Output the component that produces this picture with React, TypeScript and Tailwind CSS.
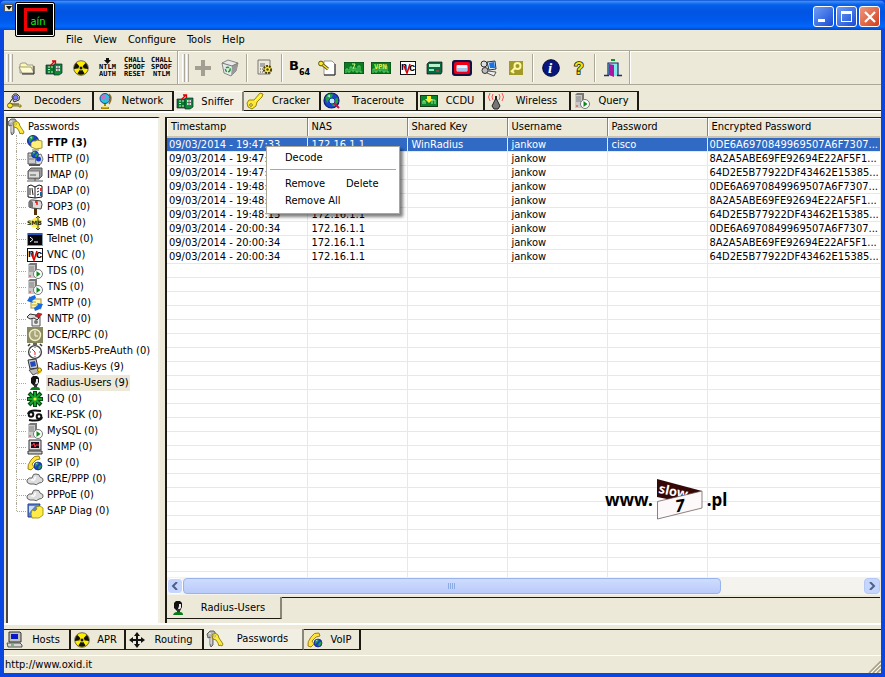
import type { ReactNode } from 'react';
import clsx from 'clsx';

/* ---------- small shared drawings, all on a 16x16 grid ---------- */

const Globe = ({ x = 8, y = 8, r = 5 }: { x?: number; y?: number; r?: number }) => (
  <g transform={`translate(${x} ${y}) scale(${r / 5})`}>
    <circle r="5" fill="#1b3fd0" stroke="#0a1c6b" strokeWidth=".8" />
    <path d="M-4-2 L-2-4.5 L1-4 L0-1.5 L-2 0 L-3 2Z M1 0 L4-2 L4.5 1 L2 4 L0 3Z" fill="#21a03c" />
    <path d="M-3-3 L-1-4 L-1-2Z" fill="#9fe8f4" />
  </g>
);

const Server = () => (
  <>
    <path d="M1 2 L3 0 H10 V13 L8 15 H1Z" fill="#777" />
    <path d="M1 2 H8 V15 H1Z" fill="#c9c9c9" />
    <path d="M2 4 H7 M2 6 H7 M2 8 H7" stroke="#808080" />
    <path d="M2 13 H4" stroke="#d33" />
    <circle cx="11" cy="11" r="4.5" fill="#fff" stroke="#777" />
    <path d="M9.5 8 L13.5 11 L9.5 14Z" fill="#0a8a1a" />
  </>
);

const Radiation = () => (
  <>
    <circle cx="8" cy="8" r="7.3" fill="#ffee00" stroke="#333" strokeWidth=".7" />
    <path d="M8 8 L1 9 A7 7 0 0 1 3.5 3Z M8 8 L15 9 A7 7 0 0 0 12.5 3Z M8 8 L4.4 13.6 A6.6 6.6 0 0 0 11.6 13.6Z" fill="#111" />
    <circle cx="8" cy="8" r="2" fill="#111" stroke="#ffee00" />
  </>
);

const Keys = () => (
  <>
    <path d="M0 3 L3 0 H7 L9 3 V5 L6 6 V14 L4 16 L3 14 V6 L1 7Z" fill="#b5b5b5" stroke="#444" strokeWidth=".8" />
    <path d="M2 3 L4 2 M4 7 V13" stroke="#eee" />
    <path d="M5 4 L8 2 L11 4 L12 7 L16 13 L15 15 L13 14 L12 15 L11 12 L9 9 L6 8Z" fill="#ffeb3b" stroke="#7c6b00" strokeWidth=".8" />
    <circle cx="7.5" cy="5" r="1" fill="#fff" stroke="#7c6b00" strokeWidth=".5" />
  </>
);

const Vnc = () => (
  <>
    <rect x=".5" y="1.5" width="15" height="13" fill="#fff" stroke="#111" />
    <text x="1" y="10" fontSize="10" fontWeight="bold" fontFamily="Liberation Sans, sans-serif">n</text>
    <text x="9" y="11" fontSize="11" fontWeight="bold" fontFamily="Liberation Sans, sans-serif">c</text>
    <path d="M4 6 L7 13 L10 4" stroke="#e00000" strokeWidth="1.6" fill="none" />
  </>
);

const Cards = () => (
  <>
    <path d="M0 5 H9 V14 H0Z" fill="#087a2c" stroke="#123" strokeWidth=".7" />
    <path d="M2 7 H8 M2 9.5 H5 M2 12 H8" stroke="#d7ead0" strokeDasharray="2 1" />
    <path d="M8 4 H16 V13 L13 15 H8Z" fill="#0b8c35" stroke="#123" strokeWidth=".7" />
    <path d="M10 6 H14 V11 H10Z" fill="#dadada" />
    <path d="M12 6 V11 M10 8.5 H14" stroke="#444" strokeWidth=".7" />
    <path d="M4 6 L9 1 M6 1 H9.5 V4" stroke="#d80000" strokeWidth="1.3" fill="none" />
  </>
);

const Cloud = () => (
  <>
    <path d="M3 13 Q-1 12 0 9 Q2 6 5 7 Q6 2 9 3 Q13 3 13 6 Q17 7 16 10 Q15 12 12 12 Q9 15 7 13Z" fill="#ddd" stroke="#555" strokeWidth=".9" />
    <path d="M4 9 Q6 8 7 10 M9 6 Q7 7 8 9" stroke="#fff" strokeWidth="1.5" fill="none" />
  </>
);

const Computer = () => (
  <>
    <path d="M2 0 H13 L14 1 V10 H2Z" fill="#c0c0c0" stroke="#333" />
    <rect x="4" y="2" width="7" height="5" fill="#0719c8" />
    <path d="M0 11 H13 L15 13 V15 H1Z" fill="#d6d6d6" stroke="#333" strokeWidth=".8" />
    <path d="M4 13 H7" stroke="#0a0" />
  </>
);

const Head = () => (
  <>
    <path d="M4 3 L6 1 H10 L12 3 V7 L10 11 H7 L4 8Z" fill="#111" />
    <path d="M9 4 H11 V8 L10 9 H8 L9 6Z" fill="#e8e8e8" />
    <path d="M7 9 H10 V12 H7Z" fill="#333" />
    <path d="M3 15 Q4 12 7 12 H10 Q13 12 13 15Z" fill="#087a18" />
  </>
);

const PhoneGlobe = () => (
  <>
    <Globe x={11} y={11} r={4} />
    <path d="M1 14 Q0 10 4 5 Q7 0 12 1 L13 4 L9 5 L5 9 L7 12 L4 15Z" fill="#ffe23b" stroke="#80690b" strokeWidth=".8" />
  </>
);

const art = {
  folder: (
    <>
      <path d="M1 13 V4 L3 3 H7 L8 5 H14 V13Z" fill="#fff9a8" stroke="#888" strokeWidth=".8" />
      <path d="M0 7 H12 L15 13 H3Z" fill="#fffbd0" stroke="#777" strokeWidth=".7" />
      <path d="M15 6 V14 H3" stroke="#222" fill="none" />
    </>
  ),
  cards: <Cards />,
  radiation: <Radiation />,
  plus: <path d="M6 0 H10 V6 H16 V10 H10 V16 H6 V10 H0 V6 H6Z" fill="#a3a093" />,
  recycle: (
    <>
      <path d="M0 3 L6 0 L16 3 L14 11 L9 16 L2 13Z" fill="#e8e8e8" stroke="#888" />
      <path d="M16 3 L14 11 L9 16 L10 6Z" fill="#999" />
      <path d="M0 3 L10 6 L16 3" stroke="#777" fill="none" />
      <circle cx="5.8" cy="9.5" r="2.3" fill="none" stroke="#149b38" strokeWidth="1.5" strokeDasharray="3 1" />
    </>
  ),
  settings: (
    <>
      <path d="M1 0 H13 V14 H1Z" fill="#ece9d8" stroke="#777" />
      <path d="M3 3 H8 V7 H3Z" fill="#aaa" />
      <path d="M3 9 H7 M3 12 H7" stroke="#555" strokeDasharray="1 1" />
      <circle cx="10.5" cy="9.5" r="3.6" fill="#ffe94b" stroke="#4b4100" strokeWidth="2" strokeDasharray="2 1" />
      <circle cx="10.5" cy="9.5" r="1.2" fill="#4b4100" />
    </>
  ),
  keydoc: (
    <>
      <path d="M5 1 H13 L16 4 V15 H5Z" fill="#fff" stroke="#999" />
      <path d="M16 4 V15 H5" stroke="#222" fill="none" />
      <circle cx="2" cy="3.5" r="2.4" fill="#ffe82b" stroke="#5c5000" />
      <path d="M4 5 L9 9" stroke="#5c5000" strokeWidth="3" />
      <path d="M4 5 L9 9" stroke="#ffe82b" strokeWidth="1.4" />
    </>
  ),
  vnc: <Vnc />,
  box: (
    <>
      <path d="M0 4 L2 2 H15 V12 L14 14 H0Z" fill="#056b45" stroke="#111" strokeWidth=".7" />
      <rect x="2" y="4" width="11" height="3" fill="#b9f3ce" />
      <path d="M2 10 H7" stroke="#93e8ab" strokeWidth="2" />
      <path d="M9 11 H12" stroke="#f33" />
    </>
  ),
  redbox: (
    <>
      <rect x="-2" y="0" width="20" height="16" rx="3" fill="#121244" />
      <rect x="0" y="2" width="16" height="12" rx="2" fill="#f00018" />
      <rect x="2.5" y="5" width="11" height="6.5" rx="1" fill="#e7f5ff" />
      <path d="M3 9.5 H13" stroke="#a7c9ee" strokeWidth="3" />
    </>
  ),
  phonepc: (
    <>
      <circle cx="3" cy="4" r="3" fill="#ddd" stroke="#333" />
      <circle cx="4" cy="10.5" r="3" fill="#bbb" stroke="#333" />
      <path d="M6 2 L14 1 L15 9 L8 10Z" fill="#d7e8ff" stroke="#234" />
      <path d="M8 3 L13 2 L14 8 L9 8Z" fill="#1673e0" />
      <path d="M7 11 L15 12 L13 16 L6 13Z" fill="#eee" stroke="#333" strokeWidth=".8" />
    </>
  ),
  olivekey: (
    <>
      <rect x="1" y="1" width="14" height="14" fill="#a29a28" />
      <circle cx="9.5" cy="6" r="3" fill="none" stroke="#fff7a2" strokeWidth="2" />
      <path d="M7 8 L3 12 M4 11 L6 13" stroke="#fff7a2" strokeWidth="2" />
    </>
  ),
  info: (
    <>
      <circle cx="8" cy="8" r="8.3" fill="#07157c" stroke="#020833" />
      <text x="5" y="13" fill="#fff" fontSize="15" fontWeight="bold" fontStyle="italic" fontFamily="Liberation Serif, serif">i</text>
    </>
  ),
  help: <text x="4" y="14" fill="#f8e000" stroke="#222" strokeWidth="1.6" paintOrder="stroke" fontSize="16" fontWeight="bold" fontFamily="Liberation Sans, sans-serif">?</text>,
  exit: (
    <>
      <path d="M6 0 H10" stroke="#0a982d" strokeWidth="2" />
      <path d="M3 16 V3 H13 V16" fill="#83e9ea" stroke="#102b68" strokeWidth="1.2" />
      <path d="M4 4 L9 5 V17 L4 15Z" fill="#ad15a5" />
      <path d="M-1 15.5 H4 M12 15.5 H17" stroke="#222e6c" strokeWidth="1.5" />
    </>
  ),
  decoders: (
    <>
      <path d="M5 4 Q6 0 10 1 Q14 3 12 7 L7 9Z" fill="#ccc" stroke="#333" />
      <circle cx="8.5" cy="4.5" r="2.3" fill="#7c7bff" stroke="#333" strokeWidth=".7" />
      <path d="M5 6 L2 11 H12" stroke="#333" fill="none" />
      <circle cx="3" cy="12.5" r="2.5" fill="#ffe934" stroke="#746400" />
      <path d="M5 12 H14 V14 H12 V13 H6" fill="#ffe934" stroke="#746400" strokeWidth=".8" />
    </>
  ),
  network: (
    <>
      <path d="M12 1 Q16 5 12 11" stroke="#967112" strokeWidth="1.5" fill="none" />
      <circle cx="8" cy="5.5" r="5" fill="#20c8dd" stroke="#243b96" />
      <path d="M4 4 L8 1 L9 4 L6 7Z M9 6 L12 4 L11 9Z" fill="#db67c5" />
      <path d="M8 11 V13 M4 15 H12" stroke="#a38b00" strokeWidth="2" />
      <path d="M5 14 H11" stroke="#ffe12d" />
    </>
  ),
  cracker: (
    <>
      <path d="M2 7 L7 7 L13 0 L16 1 L15 4 L10 9 L9 13 L5 16 L1 14 L0 10Z" fill="#ffe936" stroke="#8d7b00" strokeWidth=".9" />
      <circle cx="4" cy="12" r="1.3" fill="#fff" stroke="#8d7b00" />
      <path d="M8 8 L14 2" stroke="#fffbc4" />
    </>
  ),
  trace: (
    <>
      <Globe x={7.5} y={7.5} r={7.5} />
      <circle cx="8" cy="8" r="3" fill="#bfe9ff" stroke="#063d8b" />
      <path d="M10 10 L15 15" stroke="#bd144d" strokeWidth="2" />
    </>
  ),
  ccdu: (
    <>
      <rect x="-.5" y="2.5" width="17" height="11" fill="#07862d" stroke="#163c17" />
      <path d="M2 11 V8 H4 V11 M11 11 V7 H14 V11" stroke="#a6ec90" fill="none" />
      <path d="M6 3 H10 V6 H12 L8 10 L4 6 H6Z" fill="#fff02a" />
    </>
  ),
  wireless: (
    <>
      <path d="M8 5 L12 13 L10 16 H6 L4 13Z" fill="#777" stroke="#222" />
      <path d="M8 3 V7" stroke="#222" strokeWidth="2" />
      <path d="M5 1 Q3 4 5 7 M2 0 Q-1 4 2 8 M11 1 Q13 4 11 7 M14 0 Q17 4 14 8" stroke="#ff5252" fill="none" />
    </>
  ),
  server: <Server />,
  keys: <Keys />,
  ftp: (
    <>
      <Globe x={6} y={6} r={5.5} />
      <path d="M4 8 L6 6 H9 L10 5 L15 6 V13 L9 14 L4 12Z" fill="#fff078" stroke="#827b17" strokeWidth=".8" />
      <path d="M5 15 H12" stroke="#777" />
    </>
  ),
  http: (
    <>
      <path d="M1 2 H10 V13 H1Z" fill="#ccc" stroke="#555" />
      <path d="M2 5 H7 M2 8 H7" stroke="#777" />
      <path d="M8 5 L14 3 L16 8 L14 13 L9 14Z" fill="#ddd" stroke="#777" />
      <Globe x={8} y={3.5} r={3.5} />
      <circle cx="11.5" cy="8" r="2.5" fill="#1739cc" />
      <path d="M2 14 H13" stroke="#555" strokeWidth="2" />
    </>
  ),
  imap: (
    <>
      <path d="M1 4 L4 1 H15 V9 L12 12 H1Z" fill="#999" stroke="#555" />
      <rect x="1.5" y="4" width="11" height="7" fill="#ddd" stroke="#777" />
      <path d="M3 8 H9 M8 11 V14 M0 14 H16" stroke="#555" />
    </>
  ),
  ldap: (
    <>
      <path d="M1 3 L4 2 L8 4 L12 2 L15 3 V14 L8 15 L1 14Z" fill="#fff" stroke="#111" />
      <path d="M8 4 V15 M3 5 V12 M5 5 L6 12 M10 6 L12 5 M10 9 L12 8 M10 12 L12 11" stroke="#222" />
      <path d="M14 5 V8" stroke="#d33" strokeWidth="2" />
      <path d="M14 9 V13" stroke="#16a" strokeWidth="2" />
    </>
  ),
  pop3: (
    <>
      <path d="M7 8 H10 V16 H7Z" fill="#57350b" />
      <path d="M2 3 Q3 0 6 1 L14 2 Q16 5 14 10 L5 9 L2 8Z" fill="#ddd" stroke="#444" />
      <path d="M2 3 Q5 0 6 4 V9 L2 8Z" fill="#777" />
      <path d="M8 3 H10 V6" stroke="#e00" strokeWidth="1.3" fill="none" />
    </>
  ),
  smb: (
    <>
      <path d="M1 7 L9 2 L15 6 L12 13 L5 12Z" fill="#fff05a" />
      <path d="M11 1 V15 M9 3 L11 1 L13 3 M9 13 L11 15 L13 13" stroke="#554800" fill="none" />
      <text x="0" y="10" fontSize="6" fontWeight="bold" fill="#312a00" fontFamily="DejaVu Sans, sans-serif">SMB</text>
    </>
  ),
  telnet: (
    <>
      <rect x=".5" y="2.5" width="15" height="12" fill="#07070b" stroke="#89a" />
      <path d="M1 3 H15" stroke="#2755be" strokeWidth="2" />
      <path d="M3 6 L6 8.5 L3 11 M7 11 H11" stroke="#fff" fill="none" />
    </>
  ),
  smtp: (
    <>
      <rect x="4" y="4" width="10" height="9" fill="#fff8b0" stroke="#a39030" />
      <path d="M5 7 H9 M5 10 H11" stroke="#c4a820" />
      <path d="M8 0 L3 2 V1 L0 6 L6 8 L5 6 L9 3Z M8 16 L13 14 V15 L16 9 L10 8 L11 10 L7 13Z" fill="#1769e0" />
    </>
  ),
  nntp: (
    <>
      <path d="M5 6 H13 V15 H5Z" fill="#eee" stroke="#555" />
      <path d="M0 6 L3 3 L9 4 L12 7 L10 9 L7 7 L3 8Z" fill="#ddd" stroke="#333" />
      <path d="M8 5 L11 2 L15 3 L12 7Z" fill="#d71920" stroke="#333" strokeWidth=".6" />
      <circle cx="9" cy="11" r="2" fill="#777" />
    </>
  ),
  dce: (
    <>
      <rect width="16" height="16" fill="#8a885f" />
      <circle cx="8" cy="8" r="5.5" fill="#aaa67c" stroke="#f1efca" strokeWidth="1.4" />
      <path d="M8 4 V9 H11" stroke="#fffbd6" fill="none" />
    </>
  ),
  clock: (
    <>
      <path d="M6 1 H10 M1 3 L3 1 M15 3 L13 1" stroke="#333" strokeWidth="1.5" />
      <circle cx="8" cy="9" r="6.4" fill="#fff" stroke="#444" strokeWidth="1.4" />
      <path d="M8 4 V5 M8 13 V14 M3 9 H4 M12 9 H13" stroke="#555" />
      <path d="M5 6 L8 9 L8 12" stroke="#e02020" fill="none" />
    </>
  ),
  radkey: (
    <>
      <path d="M1 1 L9 0 L11 9 L3 10Z" fill="#c8c8c8" stroke="#333" />
      <path d="M3 3 L8 2 L9 7 L4 8Z" fill="#234abd" />
      <path d="M2 11 L11 9 L14 12 L6 16Z" fill="#bbb" stroke="#333" strokeWidth=".8" />
      <circle cx="12.5" cy="11" r="2" fill="#ffe323" stroke="#806d00" />
      <path d="M10 15 L14 12" stroke="#d5a600" strokeWidth="2" />
    </>
  ),
  head: <Head />,
  icq: (
    <>
      <path d="M8 0 V16 M0 8 H16 M2 2 L14 14 M14 2 L2 14" stroke="#074b12" strokeWidth="4" />
      <path d="M8 1 V15 M1 8 H15 M3 3 L13 13 M13 3 L3 13" stroke="#13a52b" strokeWidth="2" />
      <circle cx="8" cy="8" r="1.6" fill="#f2e42c" />
    </>
  ),
  ike: (
    <>
      <circle cx="4" cy="7.5" r="2.3" fill="none" stroke="#111" strokeWidth="2" />
      <circle cx="12" cy="9.5" r="2.3" fill="none" stroke="#111" strokeWidth="2" />
      <path d="M1 7 Q2 2 14 4 M15 10 Q14 15 2 13" stroke="#111" strokeWidth="2" fill="none" />
    </>
  ),
  snmp: (
    <>
      <path d="M2 1 H14 V11 H2Z" fill="#ddd" stroke="#333" />
      <rect x="4" y="3" width="8" height="6" fill="#160b20" />
      <path d="M4 6 H6 L7 4 L8 8 L9 6 H12" stroke="#ff343c" fill="none" />
      <path d="M1 12 H15 V15 H1Z" fill="#ccc" stroke="#333" />
    </>
  ),
  phone: <PhoneGlobe />,
  cloud: <Cloud />,
  sap: (
    <>
      <path d="M1 1 H13 L10 14 H1Z" fill="#5a83d6" stroke="#223f88" />
      <path d="M2 3 H8 L2 10Z" fill="#c9dfff" />
      <path d="M5 7 L8 8 L10 6 L9 4 L13 3 L16 5 V12 L12 15 H5 L4 11Z" fill="#ffec45" stroke="#9a8500" strokeWidth=".8" />
    </>
  ),
  computer: <Computer />,
  routing: <path d="M8 0 L11 4 H9 V7 H12 V5 L16 8 L12 11 V9 H9 V12 H11 L8 16 L5 12 H7 V9 H4 V11 L0 8 L4 5 V7 H7 V4 H5Z" fill="#111" />,
} satisfies Record<string, ReactNode>;

type IconName = keyof typeof art;

const Icon = ({ name }: { name: IconName }) => (
  <svg viewBox="0 0 16 16" className="h-4 w-4 shrink-0 overflow-visible" aria-hidden="true">
    {art[name]}
  </svg>
);

/* ---------- data ---------- */

const menus = ['File', 'View', 'Configure', 'Tools', 'Help'];

type Tab = { label: string; icon: IconName; width: string; active?: boolean };

const topTabs: Tab[] = [
  { label: 'Decoders', icon: 'decoders', width: 'w-[90px]' },
  { label: 'Network', icon: 'network', width: 'w-[80px]' },
  { label: 'Sniffer', icon: 'cards', width: 'w-[70px]', active: true },
  { label: 'Cracker', icon: 'cracker', width: 'w-[77px]' },
  { label: 'Traceroute', icon: 'trace', width: 'w-[97px]' },
  { label: 'CCDU', icon: 'ccdu', width: 'w-[67px]' },
  { label: 'Wireless', icon: 'wireless', width: 'w-[86px]' },
  { label: 'Query', icon: 'server', width: 'w-[68px]' },
];

const bottomTabs: Tab[] = [
  { label: 'Hosts', icon: 'computer', width: 'w-[67px]' },
  { label: 'APR', icon: 'radiation', width: 'w-[55px]' },
  { label: 'Routing', icon: 'routing', width: 'w-[78px]' },
  { label: 'Passwords', icon: 'keys', width: 'w-[100px]', active: true },
  { label: 'VoIP', icon: 'phone', width: 'w-[57px]' },
];

const protocols: { label: string; icon: IconName }[] = [
  { label: 'FTP (3)', icon: 'ftp' },
  { label: 'HTTP (0)', icon: 'http' },
  { label: 'IMAP (0)', icon: 'imap' },
  { label: 'LDAP (0)', icon: 'ldap' },
  { label: 'POP3 (0)', icon: 'pop3' },
  { label: 'SMB (0)', icon: 'smb' },
  { label: 'Telnet (0)', icon: 'telnet' },
  { label: 'VNC (0)', icon: 'vnc' },
  { label: 'TDS (0)', icon: 'server' },
  { label: 'TNS (0)', icon: 'server' },
  { label: 'SMTP (0)', icon: 'smtp' },
  { label: 'NNTP (0)', icon: 'nntp' },
  { label: 'DCE/RPC (0)', icon: 'dce' },
  { label: 'MSKerb5-PreAuth (0)', icon: 'clock' },
  { label: 'Radius-Keys (9)', icon: 'radkey' },
  { label: 'Radius-Users (9)', icon: 'head' },
  { label: 'ICQ (0)', icon: 'icq' },
  { label: 'IKE-PSK (0)', icon: 'ike' },
  { label: 'MySQL (0)', icon: 'server' },
  { label: 'SNMP (0)', icon: 'snmp' },
  { label: 'SIP (0)', icon: 'phone' },
  { label: 'GRE/PPP (0)', icon: 'cloud' },
  { label: 'PPPoE (0)', icon: 'cloud' },
  { label: 'SAP Diag (0)', icon: 'sap' },
];

const columns = ['Timestamp', 'NAS', 'Shared Key', 'Username', 'Password', 'Encrypted Password'];

const hashes = ['0DE6A6970849969507A6F7307...', '8A2A5ABE69FE92694E22AF5F1...', '64D2E5B77922DF43462E15385...'];
const times = ['19:47:33', '19:47:33', '19:47:33', '19:48:13', '19:48:13', '19:48:13', '20:00:34', '20:00:34', '20:00:34'];

const rows = times.map((time, i) => [
  `09/03/2014 - ${time}`,
  '172.16.1.1',
  i === 0 ? 'WinRadius' : '',
  'jankow',
  i === 0 ? 'cisco' : '',
  hashes[i % 3],
]);

const blankRows = Array.from({ length: 23 }, () => columns.map(() => ''));

/* ---------- pieces ---------- */

function ToolButton({ label, children }: { label: string; children: ReactNode }) {
  return (
    <button type="button" aria-label={label} className="flex h-7 w-[27px] shrink-0 items-center justify-center">
      {children}
    </button>
  );
}

function TinyText({ lines, arrow }: { lines: string[]; arrow?: boolean }) {
  return (
    <span className="flex flex-col items-center font-['DejaVu_Sans_Mono',monospace] text-[7px] leading-[7px] font-bold">
      {arrow && (
        <svg viewBox="0 0 7 6" className="h-1.5 w-[7px]">
          <path d="M2 0 H5 V2 H7 L3.5 6 L0 2 H2Z" fill="#111" />
        </svg>
      )}
      {lines.map((line, i) => (
        <span key={i}>{line}</span>
      ))}
    </span>
  );
}

const Grip = () => (
  <span className="flex h-7 shrink-0 gap-px">
    <span className="w-[3px] border-r border-l border-r-[#aca899] border-l-white" />
    <span className="w-[3px] border-r border-l border-r-[#aca899] border-l-white" />
  </span>
);

const Separator = () => (
  <span className="flex w-2 shrink-0 justify-center">
    <span className="h-7 w-0.5 border-r border-l border-r-white border-l-[#aca899]" />
  </span>
);

function Scope({ text }: { text?: string }) {
  return (
    <svg viewBox="0 0 20 12" className="h-3 w-5">
      <rect width="20" height="12" fill="#0c7c22" />
      <path d="M0 0 H20 V12 H0Z" fill="none" stroke="#0a3d12" />
      <path d="M2 11 V7 H4 V10 H6 V5 H8 V9 H10 V6 H12 V10 H14 V4 H16 V10 H18" fill="none" stroke="#5ed36b" />
      {text ? (
        <text x="3" y="7" fontSize="7" fontWeight="bold" fill="#e6f23c" fontFamily="DejaVu Sans Mono, monospace">
          {text}
        </text>
      ) : (
        <path d="M8 2 H11 L9 7" fill="none" stroke="#c9f97a" />
      )}
    </svg>
  );
}

function TabStrip({ tabs, bottom }: { tabs: Tab[]; bottom?: boolean }) {
  return (
    <div role="tablist" className={clsx('flex shrink-0', bottom ? 'h-[21px]' : 'h-5')}>
      {tabs.map(tab => (
        <button
          key={tab.label}
          type="button"
          role="tab"
          aria-selected={!!tab.active}
          className={clsx(
            'flex shrink-0 items-center overflow-hidden border-r-2 pl-[3px] whitespace-nowrap',
            tab.width,
            tab.active ? 'border-r-[#8a8778] bg-[#f1efe4]' : 'border-y border-r-[#1c1a12] border-y-[#1c1a12]',
            tab.active && (bottom ? 'border-b border-b-[#1c1a12]' : 'border-t border-t-white'),
          )}
        >
          <Icon name={tab.icon} />
          <span className="flex-1 text-center">{tab.label}</span>
        </button>
      ))}
      <span className={clsx('flex-1 border-[#1c1a12]', bottom ? 'border-t' : 'border-b')} />
    </div>
  );
}

function ProtocolTree() {
  return (
    <aside className="w-[154px] shrink-0 overflow-hidden border-t border-r-2 border-l-2 border-t-[#1c1a12] border-r-[#f1efe4] border-l-[#4a483e] bg-white pt-px">
      <div className="flex h-4 items-center gap-1">
        <Icon name="keys" />
        <span>Passwords</span>
      </div>
      <ul className="pl-2">
        {protocols.map(({ label, icon }, i) => (
          <li key={label} className="flex h-4 items-center">
            <span
              className={clsx(
                'w-px self-start border-l border-dotted border-[#aca899]',
                i === protocols.length - 1 ? 'h-2' : 'h-4',
              )}
            />
            <span className="mr-px w-[9px] border-t border-dotted border-[#aca899]" />
            <Icon name={icon} />
            <span
              className={clsx(
                'ml-[3px] px-px leading-4 whitespace-nowrap',
                i === 0 && 'font-bold',
                label.startsWith('Radius-Users') && 'bg-[#ece9d8]',
              )}
            >
              {label}
            </span>
          </li>
        ))}
      </ul>
    </aside>
  );
}

function ResultTable() {
  return (
    <table className="w-full table-fixed border-collapse">
      <colgroup>
        <col className="w-[140px]" />
        <col className="w-[100px]" />
        <col className="w-[100px]" />
        <col className="w-[100px]" />
        <col className="w-[100px]" />
        <col />
      </colgroup>
      <thead>
        <tr className="h-[19px] bg-[#ece9d8]">
          {columns.map(name => (
            <th
              key={name}
              className="border-r border-b-2 border-r-[#8a8778] border-b-[#c9c5b2] p-0 pl-1 text-left leading-4 font-normal shadow-[inset_1px_1px_0_#fff] last:border-r-0"
            >
              {name}
            </th>
          ))}
        </tr>
      </thead>
      <tbody>
        {[...rows, ...blankRows].map((row, r) => (
          <tr key={r} className={clsx('h-[14px]', r === 0 && 'bg-[#316ac5] text-white')}>
            {row.map((cell, c) => (
              <td
                key={c}
                className="border-r border-b border-[#ece9d8] p-0 pl-1 leading-[13px] whitespace-nowrap first:pl-0.5 last:border-r-0 last:pl-0.5"
              >
                {cell}
              </td>
            ))}
          </tr>
        ))}
      </tbody>
    </table>
  );
}

function ContextMenu() {
  return (
    <div role="menu" className="absolute top-[28px] left-[99px] w-[134px] border border-[#aca899] bg-white pt-[3px] pb-1 shadow-[3px_3px_3px_rgba(0,0,0,0.5)]">
      <button type="button" role="menuitem" className="flex h-[15px] w-full items-center pl-[18px]">
        Decode
      </button>
      <hr className="mx-[3px] mt-1 mb-[5px] border-[#aca899]" />
      <button type="button" role="menuitem" className="flex h-[17px] w-full items-center pl-[18px]">
        <span className="w-[61px] text-left">Remove</span>
        <span>Delete</span>
      </button>
      <button type="button" role="menuitem" className="flex h-[17px] w-full items-center pl-[18px]">
        Remove All
      </button>
    </div>
  );
}

function Watermark() {
  return (
    <div className="absolute top-[361px] left-[438px] flex items-center gap-1 font-['Noto_Sans',sans-serif] text-[17px] leading-10 font-bold">
      <span>www.</span>
      <svg viewBox="0 0 46 41" className="h-[41px] w-[46px]">
        <path d="M0 0 L45 12 L20 22 L0 18Z" fill="#350808" />
        <text x="1" y="14" fill="#fff" fontSize="13" fontWeight="bold" transform="rotate(12 2 14)">slow</text>
        <path d="M.5 22.5 L45 12 V29 L.5 40Z" fill="#fdf9fa" stroke="#5b4a4a" strokeWidth=".7" />
        <text x="19" y="33" fontSize="17" fontStyle="italic" fontWeight="bold" transform="rotate(-8 20 33)">7</text>
      </svg>
      <span>.pl</span>
    </div>
  );
}

function ScrollBar() {
  return (
    <div className="flex h-[18px] shrink-0 items-center bg-[#f4f3ee]">
      <button type="button" aria-label="Scroll left" className="flex h-4 w-4 items-center justify-center rounded-sm border border-white bg-[#c6d5fd]">
        <svg viewBox="0 0 8 8" className="h-2 w-2">
          <path d="M6 0 L2 4 L6 8" fill="none" stroke="#4d6185" strokeWidth="2" />
        </svg>
      </button>
      <div className="flex flex-1">
        <div className="flex h-4 w-[79%] items-center justify-center gap-px rounded-sm border border-[#98b4ec] bg-gradient-to-b from-[#cfdcff] to-[#b9cbf9]">
          {[0, 1, 2, 3].map(n => (
            <span key={n} className="h-1.5 w-px bg-[#8caae6]" />
          ))}
        </div>
      </div>
      <button type="button" aria-label="Scroll right" className="flex h-4 w-4 items-center justify-center rounded-sm border border-[#b4c8f6] bg-[#c6d5fd]">
        <svg viewBox="0 0 8 8" className="h-2 w-2">
          <path d="M2 0 L6 4 L2 8" fill="none" stroke="#4d6185" strokeWidth="2" />
        </svg>
      </button>
    </div>
  );
}

function TitleBar() {
  const box = 'flex h-[21px] w-[21px] items-center justify-center rounded-[3px] border border-white';
  return (
    <header className="relative flex h-[30px] shrink-0 items-center justify-end gap-0.5 rounded-t-md bg-[linear-gradient(to_bottom,#0a4fd0_0%,#3a8bf6_5%,#0560ea_16%,#0054e3_40%,#0058ea_65%,#0266fb_88%,#0049cf_100%)] pt-[3px] pr-[5px]">
      <span className="absolute top-1 left-1 flex h-2 w-[9px] items-center justify-center border border-[#555] bg-[#ece9d8]">
        <svg viewBox="0 0 6 4" className="h-1 w-1.5">
          <path d="M0 0 H6 L3 4Z" fill="#111" />
        </svg>
      </span>
      {/* Program badge, hangs over the menu bar */}
      <div className="absolute top-[2px] left-[15px] flex h-[35px] w-10 items-center justify-center rounded-xs border border-black bg-black shadow-[inset_0_0_0_1px_#fff]">
        <div className="flex h-[23px] w-[23px] items-center border-y-[3px] border-l-[3px] border-[#f00000] pl-1">
          <span className="pt-1 text-[11px] leading-3 text-[#12f312]">aín</span>
        </div>
      </div>
      <button type="button" aria-label="Minimize" className={clsx(box, 'bg-gradient-to-br from-[#6f9cf5] to-[#1c49d4]')}>
        <span className="mt-2 mr-1 h-[3px] w-[7px] bg-white" />
      </button>
      <button type="button" aria-label="Maximize" className={clsx(box, 'bg-gradient-to-br from-[#6f9cf5] to-[#1c49d4]')}>
        <span className="h-[11px] w-[11px] border border-t-[3px] border-white" />
      </button>
      <button type="button" aria-label="Close" className={clsx(box, 'bg-gradient-to-br from-[#f0967c] to-[#d03a10]')}>
        <svg viewBox="0 0 12 12" className="h-3 w-3">
          <path d="M1 1 L11 11 M11 1 L1 11" stroke="#fff" strokeWidth="2.2" />
        </svg>
      </button>
    </header>
  );
}

function ToolBar() {
  return (
    <div role="toolbar" className="flex h-[35px] shrink-0 items-center border-t border-b border-t-[#aca899] border-b-[#aca899] pl-0.5 shadow-[inset_0_1px_0_#fff]">
      <Grip />
      <ToolButton label="Open"><Icon name="folder" /></ToolButton>
      <ToolButton label="Start sniffer"><Icon name="cards" /></ToolButton>
      <ToolButton label="Start APR"><Icon name="radiation" /></ToolButton>
      <ToolButton label="NTLM auth"><TinyText arrow lines={['NTLM', 'AUTH']} /></ToolButton>
      <ToolButton label="Challenge spoof reset"><TinyText lines={['CHALL', 'SPOOF', 'RESET']} /></ToolButton>
      <ToolButton label="Challenge spoof NTLM"><TinyText lines={['CHALL', 'SPOOF', 'NTLM']} /></ToolButton>
      <span className="mr-[3px] ml-0.5 h-full w-0.5 border-r border-l border-r-white border-l-[#aca899]" />
      <Grip />
      <ToolButton label="Add"><Icon name="plus" /></ToolButton>
      <ToolButton label="Remove"><Icon name="recycle" /></ToolButton>
      <Separator />
      <ToolButton label="Configure"><Icon name="settings" /></ToolButton>
      <Separator />
      <ToolButton label="Base64 decoder">
        <span className="flex items-end font-['DejaVu_Sans',sans-serif] font-bold">
          <span className="mb-1 text-[13px] leading-3">B</span>
          <span className="text-[8px] leading-[7px]">64</span>
        </span>
      </ToolButton>
      <ToolButton label="Password decoder"><Icon name="keydoc" /></ToolButton>
      <ToolButton label="Type-7 decoder"><Scope /></ToolButton>
      <ToolButton label="VPN decoder"><Scope text="VPN" /></ToolButton>
      <ToolButton label="VNC decoder"><Icon name="vnc" /></ToolButton>
      <ToolButton label="Hash calculator"><Icon name="box" /></ToolButton>
      <ToolButton label="Token calculator"><Icon name="redbox" /></ToolButton>
      <ToolButton label="Remote desktop"><Icon name="phonepc" /></ToolButton>
      <ToolButton label="Syskey decoder"><Icon name="olivekey" /></ToolButton>
      <Separator />
      <ToolButton label="About"><Icon name="info" /></ToolButton>
      <ToolButton label="Help"><Icon name="help" /></ToolButton>
      <Separator />
      <ToolButton label="Exit"><Icon name="exit" /></ToolButton>
      <span className="ml-[3px] h-full w-0.5 border-r border-l border-r-white border-l-[#aca899]" />
    </div>
  );
}

export default function App() {
  return (
    <div className="flex h-screen flex-col overflow-hidden bg-[#0a46e0] font-['DejaVu_Sans_Condensed','DejaVu_Sans',sans-serif] text-[11px] leading-4 text-black">
      <TitleBar />
      <div className="mx-1 mb-1 flex min-h-0 flex-1 flex-col bg-[#ece9d8]">
        <nav className="flex h-5 shrink-0 items-center gap-[11px] pl-[62px]">
          {menus.map(menu => (
            <button key={menu} type="button">{menu}</button>
          ))}
        </nav>

        <ToolBar />

        <div className="mt-[6px] flex shrink-0 flex-col">
          <TabStrip tabs={topTabs} />
        </div>

        <div className="flex min-h-0 flex-1 gap-[5px] border-t-2 border-b-2 border-white pt-1 pl-0.5">
          <ProtocolTree />

          {/* Captured users list */}
          <main className="flex min-w-0 flex-1 flex-col border-t border-l-2 border-t-[#1c1a12] border-l-[#1c1a12] pr-px">
            <div className="relative min-h-0 flex-1 overflow-hidden bg-white">
              <ResultTable />
              <Watermark />
              <ContextMenu />
            </div>
            <ScrollBar />
            <div role="tablist" className="mt-0.5 mb-1 flex h-[22px] shrink-0">
              <button
                type="button"
                role="tab"
                aria-selected="true"
                className="flex w-[115px] items-center border-r-2 border-b border-r-[#8a8778] border-b-[#1c1a12] pl-[3px]"
              >
                <Icon name="head" />
                <span className="flex-1 text-center">Radius-Users</span>
              </button>
              <span className="flex-1 border-t border-[#1c1a12]" />
            </div>
          </main>
        </div>

        <div className="mt-1 flex shrink-0 flex-col">
          <TabStrip tabs={bottomTabs} bottom />
        </div>

        <footer className="mt-[5px] flex h-[18px] shrink-0 items-end justify-between border-t border-white">
          <a href="http://www.oxid.it" className="pl-px">http://www.oxid.it</a>
          <svg viewBox="0 0 13 13" className="h-[13px] w-[13px]">
            <path d="M1 13 L13 1 M5 13 L13 5 M9 13 L13 9" stroke="#a5a08c" strokeWidth="1.6" />
            <path d="M3 13 L13 3 M7 13 L13 7" stroke="#fff" strokeWidth=".8" />
          </svg>
        </footer>
      </div>
    </div>
  );
}
